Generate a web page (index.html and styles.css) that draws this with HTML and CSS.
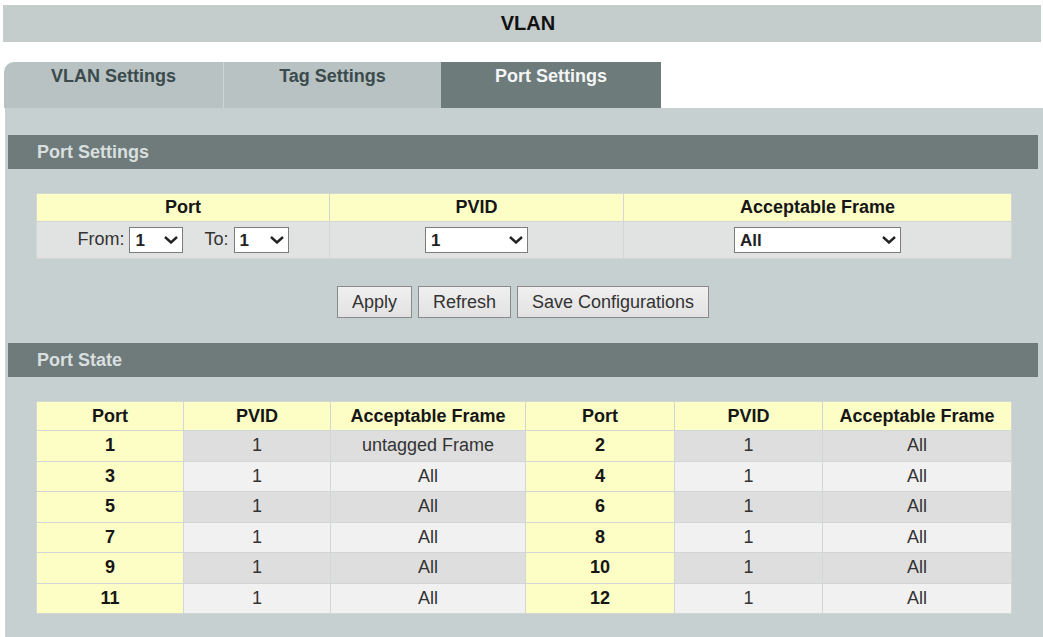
FILE: index.html
```html
<!DOCTYPE html>
<html lang="en">
<head>
<title>VLAN</title>
<meta charset="UTF-8">
<link rel="stylesheet" href="styles.css">
</head>
<body>
<div class="title">VLAN</div>
<ul class="tabs">
 <li class="tab-a">VLAN Settings</li>
 <li class="tab-b">Tag Settings</li>
 <li class="tab-c active">Port Settings</li>
</ul>
<div class="panel">
 <div class="section">Port Settings</div>
 <table class="grid cfg">
  <tr class="head">
   <th class="c1">Port</th>
   <th class="c2">PVID</th>
   <th>Acceptable Frame</th>
  </tr>
  <tr>
   <td>
    <span class="lbl">From:</span>
    <span class="sel w54"><select><option>1</option></select><svg viewBox="0 0 14 8"><path d="M1 1l6 5.5 6-5.5"/></svg></span>
    <span class="lbl to">To:</span>
    <span class="sel w55"><select><option>1</option></select><svg viewBox="0 0 14 8"><path d="M1 1l6 5.5 6-5.5"/></svg></span>
   </td>
   <td><span class="sel w103"><select><option>1</option></select><svg viewBox="0 0 14 8"><path d="M1 1l6 5.5 6-5.5"/></svg></span></td>
   <td><span class="sel w167"><select><option>All</option></select><svg viewBox="0 0 14 8"><path d="M1 1l6 5.5 6-5.5"/></svg></span></td>
  </tr>
 </table>
 <div class="buttons">
  <button>Apply</button>
  <button>Refresh</button>
  <button>Save Configurations</button>
 </div>
 <div class="section">Port State</div>
 <table class="grid state">
  <tr class="head">
   <th class="p1">Port</th><th class="v1">PVID</th><th class="f1">Acceptable Frame</th>
   <th class="p2">Port</th><th class="v2">PVID</th><th>Acceptable Frame</th>
  </tr>
  <tr class="odd"><td class="port">1</td><td>1</td><td>untagged Frame</td><td class="port">2</td><td>1</td><td>All</td></tr>
  <tr><td class="port">3</td><td>1</td><td>All</td><td class="port">4</td><td>1</td><td>All</td></tr>
  <tr class="odd"><td class="port">5</td><td>1</td><td>All</td><td class="port">6</td><td>1</td><td>All</td></tr>
  <tr><td class="port">7</td><td>1</td><td>All</td><td class="port">8</td><td>1</td><td>All</td></tr>
  <tr class="odd"><td class="port">9</td><td>1</td><td>All</td><td class="port">10</td><td>1</td><td>All</td></tr>
  <tr><td class="port">11</td><td>1</td><td>All</td><td class="port">12</td><td>1</td><td>All</td></tr>
 </table>
</div>
</body>
</html>
```

FILE: styles.css
```css
html, body { margin: 0; background: #fff; }
body { font: 18px "Liberation Sans", Arial, sans-serif; color: #333; }

.title { margin: 5px 2px 0 3px; height: 37px; line-height: 37px;
         padding-left: 12px; background: #c4cccc; text-align: center;
         font-weight: bold; font-size: 20px; color: #111; }

.tabs { display: flex; list-style: none; margin: 20px 0 0 4px; padding: 0;
        height: 46px; }
.tabs li { background: #b8c2c2; color: #3b4b4d; font-weight: bold;
           text-align: center; padding-top: 3px; line-height: 22px; }
.tab-a { width: 219px; border-top-left-radius: 10px; }
.tab-b { width: 217px; border-left: 1px solid #cdd5d5; }
.tab-c { width: 220px; }
.tabs li.active { background: #6e7b7b; color: #f4f6f6; }

.panel { margin-left: 5px; background: #c6d0d0; padding: 27px 5px 30px 3px; }
.section { height: 34px; line-height: 34px; padding-left: 29px;
           background: #6f7b7b; color: #d8dfdf; font-weight: bold; }

.grid { width: 976px; margin: 24px 0 0 28px; border-collapse: collapse;
        table-layout: fixed; }
.grid th, .grid td { border: 1px solid #d3d7d4; text-align: center;
                     padding: 0; }
.grid th { color: #161616; font-weight: bold; }
.grid .head th { background: #fdfdc6; }

.cfg .head th { height: 27px; }
.cfg td { height: 36px; background: #e1e2e2; }
.cfg .c1 { width: 292px; }
.cfg .c2 { width: 293px; }

.lbl { color: #333; }
.lbl.to { margin-left: 16px; }
.sel { display: inline-block; position: relative; vertical-align: middle; }
.sel select { -webkit-appearance: none; appearance: none; height: 26px;
              width: 100%; border: 1px solid #7c7c7c; border-radius: 0;
              background: #fff; font: bold 17px "Liberation Sans", Arial, sans-serif;
              color: #222; padding: 0 5px; margin: 0; }
.sel svg { position: absolute; right: 5px; top: 9px; width: 14px; height: 8px;
           fill: none; stroke: #222; stroke-width: 2.4; pointer-events: none; }
.w54 { width: 54px; }
.w55 { width: 55px; }
.w103 { width: 103px; }
.w167 { width: 167px; }

.buttons { display: flex; justify-content: center; gap: 6px;
           margin: 27px 0 25px; }
.buttons button { height: 32px; padding: 0 14px; border: 1px solid #8a8a8a;
                  background: linear-gradient(#f0f0f0, #e2e2e2);
                  font: 18px "Liberation Sans", Arial, sans-serif; color: #333; }

.state { margin-top: 24px; }
.state .head th { height: 28px; }
.state td { height: 29.5px; background: #f1f1f1; }
.state tr.odd td { background: #dedede; }
.state td.port, .state tr.odd td.port { background: #fdfdc6; color: #161616;
                                          font-weight: bold; }
.state .p1, .state .v1 { width: 146px; }
.state .f1 { width: 194px; }
.state .p2 { width: 148px; }
.state .v2 { width: 147px; }
```
